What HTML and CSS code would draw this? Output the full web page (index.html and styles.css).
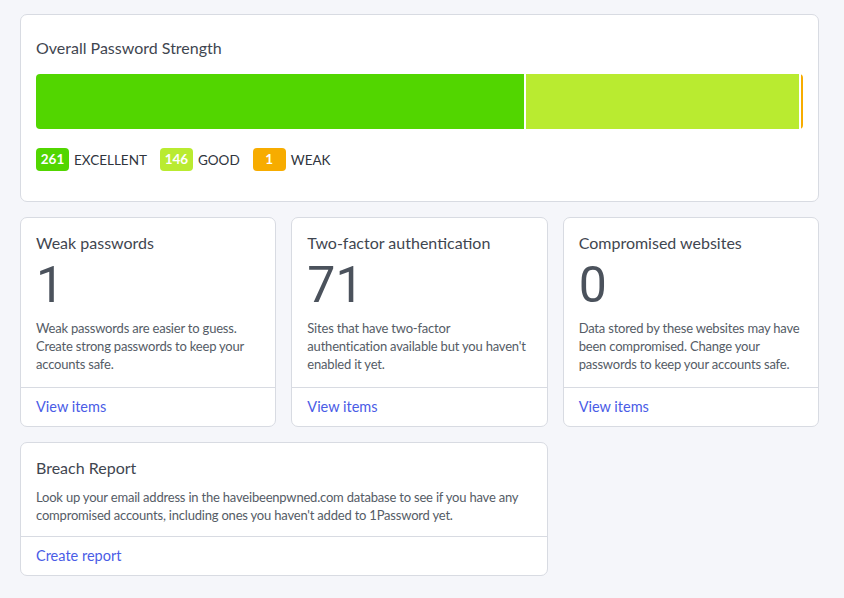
FILE: index.html
```html
<!DOCTYPE html>
<html lang="en">
<head>
    <meta charset="UTF-8">
    <meta name="viewport" content="width=device-width, initial-scale=1.0">
    <title>Watchtower</title>
    <link rel="stylesheet" href="styles.css">
</head>
<body>
    <div class="page">
        <section class="card strength">
            <h2 class="card-title">Overall Password Strength</h2>
            <div class="bar">
                <div class="seg excellent" style="flex-grow: 261"></div>
                <div class="seg good" style="flex-grow: 146"></div>
                <div class="seg weak" style="flex-grow: 1"></div>
            </div>
            <div class="legend">
                <span class="item"><span class="badge excellent">261</span>EXCELLENT</span>
                <span class="item"><span class="badge good">146</span>GOOD</span>
                <span class="item"><span class="badge weak">1</span>WEAK</span>
            </div>
        </section>

        <div class="grid">
            <section class="card stat">
                <div class="card-body">
                    <h2 class="card-title">Weak passwords</h2>
                    <div class="count">1</div>
                    <p class="desc">Weak passwords are easier to guess. Create strong passwords to keep your accounts safe.</p>
                </div>
                <div class="card-foot"><a href="#">View items</a></div>
            </section>
            <section class="card stat">
                <div class="card-body">
                    <h2 class="card-title">Two-factor authentication</h2>
                    <div class="count">71</div>
                    <p class="desc">Sites that have two-factor authentication available but you haven't enabled it yet.</p>
                </div>
                <div class="card-foot"><a href="#">View items</a></div>
            </section>
            <section class="card stat">
                <div class="card-body">
                    <h2 class="card-title">Compromised websites</h2>
                    <div class="count">0</div>
                    <p class="desc">Data stored by these websites may have been compromised. Change your passwords to keep your accounts safe.</p>
                </div>
                <div class="card-foot"><a href="#">View items</a></div>
            </section>
            <section class="card breach">
                <div class="card-body">
                    <h2 class="card-title">Breach Report</h2>
                    <p class="desc">Look up your email address in the haveibeenpwned.com database to see if you have any compromised accounts, including ones you haven't added to 1Password yet.</p>
                </div>
                <div class="card-foot"><a href="#">Create report</a></div>
            </section>
        </div>
    </div>
</body>
</html>
```

FILE: styles.css
```css
body {
    margin: 0;
    background-color: #f5f6fa;
    font-family: Lato, "Noto Sans", sans-serif;
    color: #434a54;
}
.page {
    padding: 14px 25px 20px 20px;
}
.card {
    background-color: white;
    border: 1px solid #d8dbe2;
    border-radius: 7px;
    box-sizing: border-box;
}
.card-title {
    font-size: 16px;
    font-weight: normal;
    margin: 0;
    line-height: 20px;
    color: #3f4650;
}
.strength {
    padding: 23px 15px 18px 15px;
    height: 188px;
}
.bar {
    display: flex;
    gap: 2px;
    height: 55px;
    margin-top: 16px;
    border-radius: 4px;
    overflow: hidden;
}
.seg.excellent { background-color: #52d600; }
.seg.good { background-color: #b9eb30; }
.seg.weak { background-color: #f7ac00; }
.legend {
    display: flex;
    gap: 13px;
    margin-top: 19px;
    font-size: 13.5px;
    color: #2f353d;
}
.item {
    display: flex;
    align-items: center;
    gap: 5px;
}
.badge {
    display: inline-block;
    min-width: 33px;
    height: 23px;
    line-height: 23px;
    padding: 0 4px;
    box-sizing: border-box;
    border-radius: 4px;
    color: white;
    font-weight: bold;
    text-align: center;
}
.badge.excellent { background-color: #52d600; }
.badge.good { background-color: #b9eb30; }
.badge.weak { background-color: #f7ac00; }
.grid {
    display: grid;
    grid-template-columns: repeat(3, 1fr);
    gap: 15px;
    margin-top: 15px;
}
.stat {
    height: 210px;
    display: flex;
    flex-direction: column;
}
.breach {
    grid-column: span 2;
    height: 134px;
    display: flex;
    flex-direction: column;
}
.card-body {
    flex: 1;
    padding: 15px 15px 0 15px;
}
.count {
    font-family: Roboto, Lato, sans-serif;
    font-size: 50px;
    line-height: 56px;
    margin-top: 4px;
    color: #4b525c;
}
.desc {
    font-size: 13px;
    letter-spacing: -0.2px;
    line-height: 18px;
    margin: 6px 0 0 0;
    color: #555c66;
}
.breach .desc {
    margin-top: 10px;
}
.card-foot {
    border-top: 1px solid #d8dbe2;
    height: 38px;
    line-height: 38px;
    padding: 0 15px;
    font-size: 14.5px;
}
.card-foot a {
    color: #4a5ce6;
    text-decoration: none;
}
```
